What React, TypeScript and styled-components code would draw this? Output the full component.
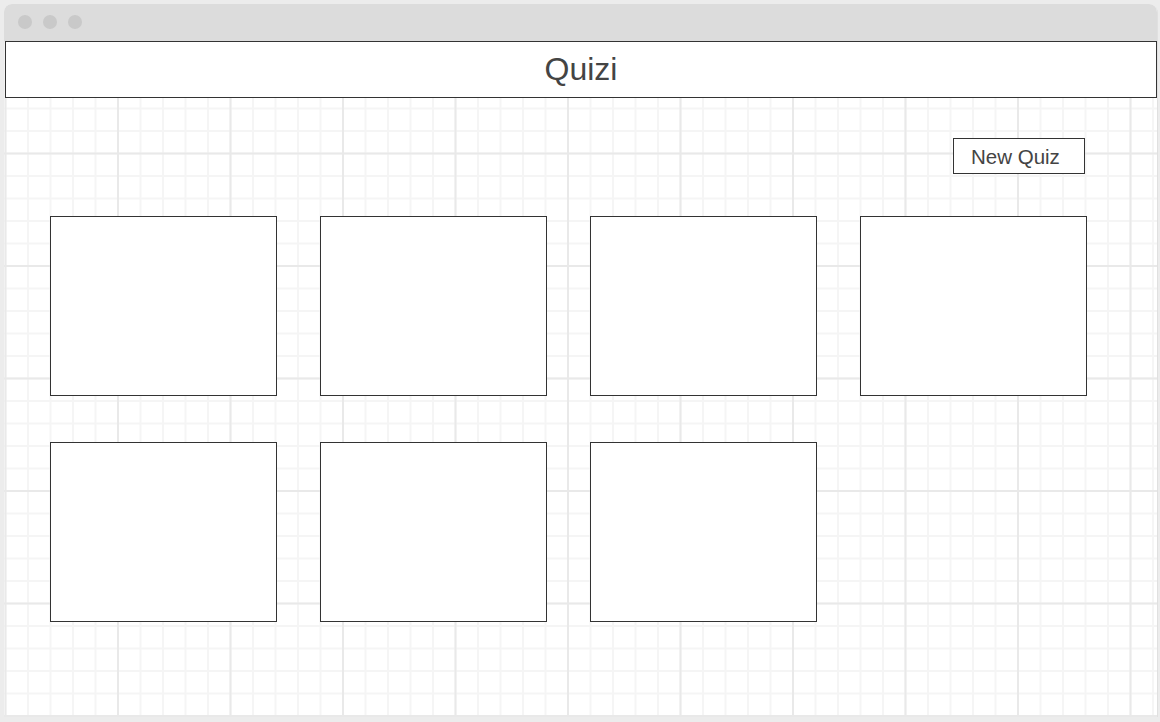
import React from 'react';
import styled, { createGlobalStyle } from 'styled-components';

const GlobalStyle = createGlobalStyle`
    html, body {
        margin: 0;
        padding: 0;
        background: #ececec;
        font-family: 'Liberation Sans', Arial, sans-serif;
    }
`;

const quizzes = [1, 2, 3, 4, 5, 6, 7];

const App: React.FC = () => {
    return (
        <>
            <GlobalStyle />
            <SWindow>
                <STitleBar>
                    <SDot />
                    <SDot />
                    <SDot />
                </STitleBar>
                <SCanvas>
                    <SHeader>
                        <STitle>Quizi</STitle>
                    </SHeader>
                    <SMain>
                        <SToolbar>
                            <SButton>New Quiz</SButton>
                        </SToolbar>
                        <SCardGrid>
                            {quizzes.map(id => (
                                <SCard key={id} />
                            ))}
                        </SCardGrid>
                    </SMain>
                </SCanvas>
            </SWindow>
        </>
    );
};

export default App;

const SWindow = styled.div`
    display: flex;
    flex-direction: column;
    width: 1153px;
    height: 713px;
    margin: 4px 0 0 4px;
    border-radius: 8px 8px 0 0;
    overflow: hidden;
    background: #fff;
    box-shadow: 1px 1px 0 #e0e0e0;
`;

const STitleBar = styled.div`
    display: flex;
    align-items: center;
    gap: 11px;
    height: 37px;
    padding-left: 14px;
    padding-bottom: 1px;
    box-sizing: border-box;
    background: #dcdcdc;
    flex-shrink: 0;
`;

const SDot = styled.span`
    width: 14px;
    height: 14px;
    border-radius: 50%;
    background: #c9c9c9;
`;

const SCanvas = styled.div`
    flex: 1;
    display: flex;
    flex-direction: column;
    background-color: #fff;
    background-image:
        linear-gradient(to right, #e9e9e9 2px, transparent 2px),
        linear-gradient(to bottom, #e9e9e9 2px, transparent 2px),
        linear-gradient(to right, #f5f5f5 2px, transparent 2px),
        linear-gradient(to bottom, #f5f5f5 2px, transparent 2px);
    background-size: 112.5px 112.5px, 112.5px 112.5px, 22.5px 22.5px, 22.5px 22.5px;
    background-position: 0.5px -1px;
`;

const SHeader = styled.header`
    display: flex;
    align-items: center;
    justify-content: center;
    height: 55px;
    margin-left: 1px;
    border: 1px solid #333;
    background: #fff;
`;

const STitle = styled.h1`
    margin: 0;
    font-size: 32px;
    font-weight: normal;
    color: #444;
`;

const SMain = styled.main`
    display: flex;
    flex-direction: column;
    padding: 40px 0 0 46px;
`;

const SToolbar = styled.div`
    display: flex;
    justify-content: flex-end;
    padding-right: 72px;
`;

const SButton = styled.button`
    width: 132px;
    height: 36px;
    padding: 2px 0 0 17px;
    text-align: left;
    border: 1px solid #333;
    background: #fff;
    font-family: 'Liberation Sans', Arial, sans-serif;
    font-size: 20.5px;
    color: #444;
`;

const SCardGrid = styled.div`
    display: grid;
    grid-template-columns: repeat(4, 227px);
    grid-auto-rows: 180px;
    column-gap: 43px;
    row-gap: 46px;
    margin-top: 42px;
`;

const SCard = styled.div`
    border: 1px solid #333;
    background: #fff;
`;
